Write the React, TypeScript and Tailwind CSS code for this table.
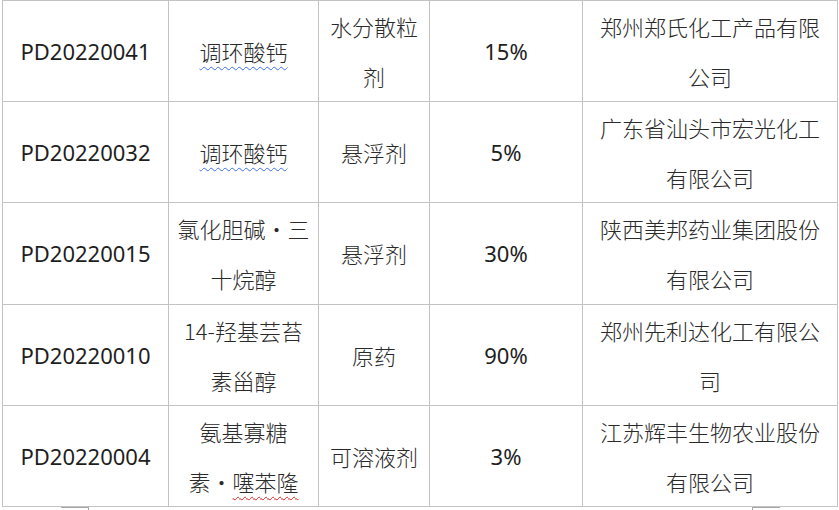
const rows = [
  { no: "PD20220041", name: <Squiggle color="blue">调环酸钙</Squiggle>, form: "水分散粒剂", pct: "15%", co: "郑州郑氏化工产品有限公司" },
  { no: "PD20220032", name: <Squiggle color="blue">调环酸钙</Squiggle>, form: "悬浮剂", pct: "5%", co: "广东省汕头市宏光化工有限公司" },
  { no: "PD20220015", name: "氯化胆碱·三十烷醇", form: "悬浮剂", pct: "30%", co: "陕西美邦药业集团股份有限公司" },
  { no: "PD20220010", name: "14-羟基芸苔素甾醇", form: "原药", pct: "90%", co: "郑州先利达化工有限公司" },
  {
    no: "PD20220004",
    name: (
      <>
        氨基寡糖
        <br />
        素·<Squiggle color="red">噻苯隆</Squiggle>
      </>
    ),
    form: "可溶液剂",
    pct: "3%",
    co: "江苏辉丰生物农业股份有限公司",
  },
];

function Squiggle({ color, children }: { color: "blue" | "red"; children: React.ReactNode }) {
  return (
    <span
      className={
        color === "blue"
          ? "underline decoration-wavy decoration-[#3d6ff0] decoration-1 underline-offset-[5px]"
          : "underline decoration-wavy decoration-[#e02020] decoration-1 underline-offset-[5px]"
      }
    >
      {children}
    </span>
  );
}

const cell = "border border-[#c3c3c3] px-[7px] py-0 text-center align-middle";
const cjk = "font-['Noto_Sans_CJK_SC',sans-serif] font-light text-[#2a2a2a]";
const latin = "font-['Noto_Sans','Noto_Sans_CJK_SC',sans-serif] text-[#1e1e1e]";

export default function App() {
  return (
    <div className="relative h-[510px] w-[839px] overflow-hidden bg-white">
      <table className="ml-[2px] w-[835px] table-fixed border-collapse text-[22px] leading-[50.1px]">
        <colgroup>
          <col className="w-[166px]" />
          <col className="w-[150px]" />
          <col className="w-[111px]" />
          <col className="w-[153px]" />
          <col className="w-[255px]" />
        </colgroup>
        <tbody>
          {rows.map((r) => (
            <tr key={r.no}>
              <td className={`${cell} ${latin}`}>{r.no}</td>
              <td className={`${cell} ${cjk}`}>{r.name}</td>
              <td className={`${cell} ${cjk}`}>{r.form}</td>
              <td className={`${cell} ${latin}`}>{r.pct}</td>
              <td className={`${cell} ${cjk}`}>{r.co}</td>
            </tr>
          ))}
        </tbody>
      </table>
      {/* selection markers peeking below the table */}
      <div className="absolute left-[61px] top-[507px] h-[4px] w-[28px] border-r border-t border-[#a8a8a8]" />
      <div className="absolute left-[752px] top-[507px] h-[4px] w-[28px] border-l border-t border-[#a8a8a8]" />
    </div>
  );
}
